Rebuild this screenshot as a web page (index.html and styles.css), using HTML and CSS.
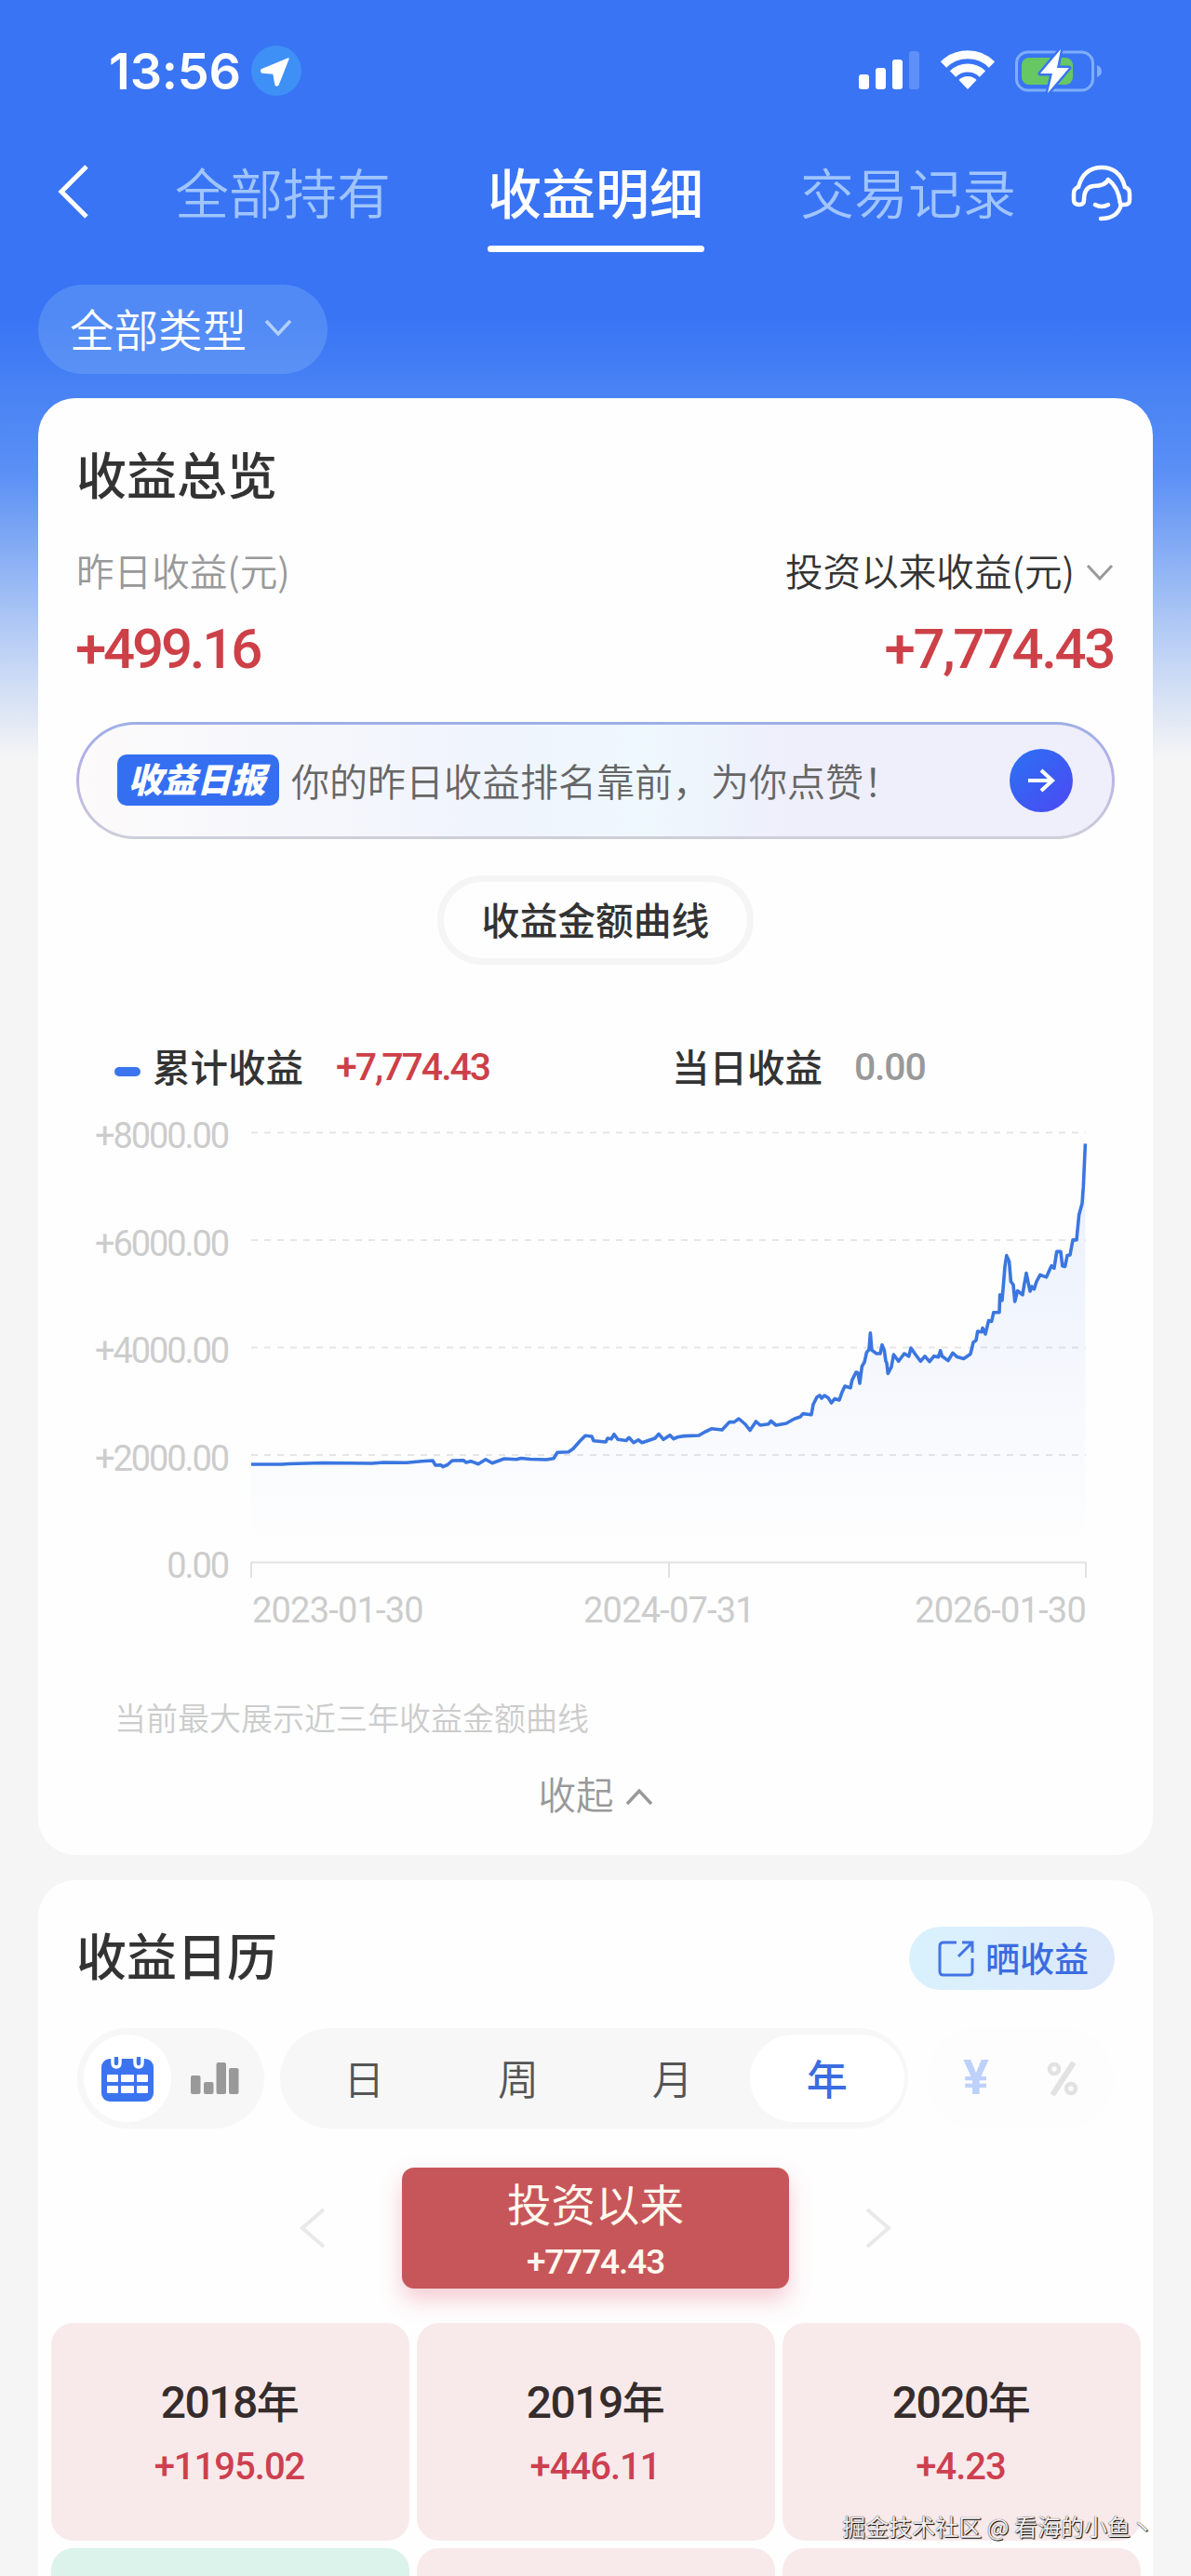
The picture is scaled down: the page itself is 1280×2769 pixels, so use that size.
FILE: index.html
```html
<!DOCTYPE html>
<html lang="zh-CN">
<head>
    <meta charset="UTF-8">
    <title>收益明细</title>
    <link rel="stylesheet" href="styles.css">
</head>
<body>
    <div class="page">
        <!-- Status bar -->
        <div class="status-bar">
            <span class="time">13:56</span>
            <span class="location">
                <svg width="54" height="54" viewBox="0 0 54 54"><path d="M40 14 L11 26 Q10 28 12 29 L24 30 L26 42 Q27 44 29 42 Z" fill="#fff" stroke="#fff" stroke-width="1.5" stroke-linejoin="round"/></svg>
            </span>
            <div class="status-icons">
                <svg width="66" height="44" viewBox="0 0 66 44" fill="#fff">
                    <rect x="0" y="26" width="11" height="16" rx="3"/>
                    <rect x="18" y="19" width="11" height="23" rx="3"/>
                    <rect x="36" y="10" width="11" height="32" rx="3"/>
                    <rect x="54" y="1" width="11" height="41" rx="3" opacity=".2"/>
                </svg>
                <svg width="60" height="44" viewBox="0 0 60 44" fill="none" stroke="#fff" stroke-width="9">
                    <path d="M4 15.500 A37 37 0 0 1 56 15.500"/>
                    <path d="M14 25.500 A23 23 0 0 1 46 25.500"/>
                    <path d="M30 42 L20.500 32 A13.500 13.500 0 0 1 39.500 32 Z" fill="#fff" stroke="none"/>
                </svg>
                <svg width="94" height="48" viewBox="0 0 94 48">
                    <rect x="1.500" y="4" width="82" height="41" rx="12" fill="none" stroke="#7eaefa" stroke-width="3"/>
                    <path d="M88 18 Q93 20 93 24.500 Q93 29 88 31 Z" fill="#7eaefa"/>
                    <rect x="7" y="10" width="55" height="29" rx="8" fill="#66c763"/>
                    <path d="M49 1 L27 27 H40 L35 48 L58 21 H45 Z" fill="#fff" stroke="#3974f5" stroke-width="5" stroke-linejoin="round" paint-order="stroke"/>
                </svg>
            </div>
        </div>

        <!-- Navigation -->
        <div class="nav">
            <svg class="back" width="34" height="60" viewBox="0 0 34 60"><path d="M31 3 L4 30 L31 57" fill="none" stroke="#fff" stroke-width="5"/></svg>
            <span class="tab">全部持有</span>
            <span class="tab active">收益明细</span>
            <span class="tab">交易记录</span>
            <svg class="service" width="66" height="62" viewBox="0 0 66 62" fill="none" stroke="#fff" stroke-width="4.500" stroke-linecap="round" stroke-linejoin="round">
                <path d="M8 24 C12 9 21 3 33 3 C45 3 54 9 58 24"/>
                <path d="M8 24 Q3 26 3 31 V38 Q3 43 9 43 Q14 43 14 38 Q14 24 24 23 Q37 23 40 16 Q51 24 53 42"/>
                <path d="M58 24 Q63 26 63 31 V38 Q63 43 58 43 L54 43 Q50 58 32 58"/>
                <path d="M26 43 Q33 47 40 43"/>
            </svg>
        </div>

        <div class="filter">
            <span>全部类型</span>
            <svg width="30" height="20" viewBox="0 0 30 20"><path d="M2 2 L15 16 L28 2" fill="none" stroke="#b5cffc" stroke-width="3.500"/></svg>
        </div>

        <!-- Overview card -->
        <div class="card overview">
            <h2>收益总览</h2>
            <div class="summary">
                <div class="summary-item">
                    <div class="summary-label muted">昨日收益(元)</div>
                    <div class="summary-value">+499.16</div>
                </div>
                <div class="summary-item right">
                    <div class="summary-label">投资以来收益(元)
                        <svg width="30" height="20" viewBox="0 0 30 20"><path d="M2 2 L15 16 L28 2" fill="none" stroke="#999" stroke-width="3"/></svg>
                    </div>
                    <div class="summary-value">+7,774.43</div>
                </div>
            </div>

            <div class="banner">
                <span class="banner-tag">收益日报</span>
                <span class="banner-text">你的昨日收益排名靠前，为你点赞！</span>
                <span class="banner-arrow">
                    <svg width="30" height="28" viewBox="0 0 30 28"><path d="M1 14 H27 M15 3 L27 14 L15 25" fill="none" stroke="#fff" stroke-width="4"/></svg>
                </span>
            </div>

            <div class="curve-tab">收益金额曲线</div>

            <div class="legend">
                <span class="legend-mark"></span>
                <span class="legend-name">累计收益</span>
                <span class="legend-value red">+7,774.43</span>
                <span class="legend-name second">当日收益</span>
                <span class="legend-value gray">0.00</span>
            </div>

            <div class="chart">
                <div class="y-axis">
                    <span>+8000.00</span>
                    <span>+6000.00</span>
                    <span>+4000.00</span>
                    <span>+2000.00</span>
                    <span>0.00</span>
                </div>
                <svg class="plot" width="900" height="500" viewBox="-1 0 900 500">
                    <defs>
                        <linearGradient id="areaFill" gradientUnits="userSpaceOnUse" x1="0" y1="30" x2="0" y2="460">
                            <stop offset="0" stop-color="#3974e8" stop-opacity=".11"/>
                            <stop offset="1" stop-color="#3974e8" stop-opacity="0"/>
                        </linearGradient>
                    </defs>
                    <g stroke="#e6e6e6" stroke-width="2" stroke-dasharray="7 7">
                        <path d="M0 17.500H897"/>
                        <path d="M0 133H897"/>
                        <path d="M0 248.500H897"/>
                        <path d="M0 364H897"/>
                    </g>
                    <path d="M0 496V479.500H897V496M449 480V496" fill="none" stroke="#e2e2e2" stroke-width="2"/>
                    <path id="area" fill="url(#areaFill)"/>
                    <path id="line" fill="none" stroke="#3b76e0" stroke-width="3.600" stroke-linejoin="round"/>
                </svg>
            </div>
            <div class="x-axis">
                <span>2023-01-30</span>
                <span>2024-07-31</span>
                <span>2026-01-30</span>
            </div>

            <div class="note">当前最大展示近三年收益金额曲线</div>
            <div class="collapse">收起
                <svg width="30" height="20" viewBox="0 0 30 20"><path d="M2 18 L15 4 L28 18" fill="none" stroke="#999" stroke-width="3.500"/></svg>
            </div>
        </div>

        <!-- Calendar card -->
        <div class="card calendar">
            <div class="calendar-header">
                <h2>收益日历</h2>
                <div class="share">
                    <svg width="40" height="40" viewBox="0 0 40 40" fill="none" stroke="#4474e4" stroke-width="3"><path d="M20 3 H6 Q2 3 2 7 V34 Q2 38 6 38 H33 Q37 38 37 34 V20"/><path d="M22 18 L37 3 M26 3 H37 V14"/></svg>
                    <span>晒收益</span>
                </div>
            </div>

            <div class="switches">
                <div class="switch view">
                    <span class="option active">
                        <svg width="56" height="50" viewBox="0 0 56 50">
                            <rect x="0" y="4" width="56" height="46" rx="9" fill="#3b74ee"/>
                            <g fill="none" stroke="#fff" stroke-width="3.500">
                                <path d="M12 2 V8 Q12 13 16 13 Q20 13 20 8 V2 M36 2 V8 Q36 13 40 13 Q44 13 44 8 V2"/>
                            </g>
                            <path d="M16 2V9M40 2V9" stroke="#3b74ee" stroke-width="4"/>
                            <g fill="#fff">
                                <rect x="6" y="21" width="12" height="8" rx="1"/><rect x="21" y="21" width="14" height="8" rx="1"/><rect x="38" y="21" width="12" height="8" rx="1"/>
                                <rect x="6" y="33" width="12" height="8" rx="1"/><rect x="21" y="33" width="14" height="8" rx="1"/><rect x="38" y="33" width="12" height="8" rx="1"/>
                            </g>
                        </svg>
                    </span>
                    <span class="option">
                        <svg width="52" height="36" viewBox="0 0 52 36" fill="#999">
                            <rect x="0" y="15" width="10.500" height="20" rx="2"/>
                            <rect x="14" y="22" width="10.500" height="13" rx="2"/>
                            <rect x="27.500" y="1" width="10.500" height="34" rx="2"/>
                            <rect x="41" y="7" width="10.500" height="28" rx="2"/>
                        </svg>
                    </span>
                </div>
                <div class="switch period">
                    <span class="option">日</span>
                    <span class="option">周</span>
                    <span class="option">月</span>
                    <span class="option active">年</span>
                </div>
                <div class="switch unit">
                    <span class="option yuan">¥</span>
                    <span class="option percent">
                        <svg width="34" height="38" viewBox="0 0 34 38" fill="none" stroke="#e2e2e2" stroke-width="4.500"><circle cx="8" cy="9" r="5"/><circle cx="26" cy="30" r="5"/><path d="M29 2 L6 37" stroke-width="6"/></svg>
                    </span>
                </div>
            </div>

            <div class="range">
                <svg width="30" height="46" viewBox="0 0 30 46"><path d="M27 3 L4 23 L27 43" fill="none" stroke="#e9e9e9" stroke-width="4"/></svg>
                <div class="range-total">
                    <div class="range-name">投资以来</div>
                    <div class="range-value">+7774.43</div>
                </div>
                <svg width="30" height="46" viewBox="0 0 30 46"><path d="M3 3 L26 23 L3 43" fill="none" stroke="#e9e9e9" stroke-width="4"/></svg>
            </div>

            <div class="years">
                <div class="year"><div class="year-name">2018<b>年</b></div><div class="year-value">+1195.02</div></div>
                <div class="year"><div class="year-name">2019<b>年</b></div><div class="year-value">+446.11</div></div>
                <div class="year"><div class="year-name">2020<b>年</b></div><div class="year-value">+4.23</div></div>
                <div class="year loss"></div>
                <div class="year"></div>
                <div class="year"></div>
            </div>
        </div>

        <div class="watermark">掘金技术社区 @ 看海的小鱼丶</div>
    </div>
    <script src="chart.js"></script>
</body>
</html>
```
FILE: styles.css
```css
body {
    margin: 0;
    font-family: "Noto Sans CJK SC", sans-serif;
    color: #333;
    background-color: #f5f5f5;
}
.page {
    position: relative;
    width: 1280px;
    height: 2769px;
    overflow: hidden;
    background: linear-gradient(180deg, #3974f5 0, #3974f5 340px, #4a84f4 430px, #5b90f5 510px, #8fb3f4 610px, #c3d5f5 710px, #f5f5f5 815px);
}

/* Status bar */
.status-bar {
    display: flex;
    align-items: center;
    height: 152px;
    padding: 0 95px 0 117px;
}
.time {
    width: 153px;
    font-family: Inter, sans-serif;
    font-size: 54px;
    font-weight: 600;
    letter-spacing: -0.2px;
    color: #fff;
}
.location {
    width: 54px;
    height: 54px;
    border-radius: 50%;
    background-color: #3f90f6;
}
.status-icons {
    display: flex;
    align-items: center;
    gap: 21px;
    margin-left: auto;
}

/* Navigation */
.nav {
    display: flex;
    align-items: center;
    height: 119px;
    padding: 0 63px 0 62px;
}
.back {
    margin: -12px 92px 0 0;
}
.tab {
    box-sizing: border-box;
    height: 119px;
    width: 233px;
    margin-right: 103px;
    line-height: 106px;
    font-size: 58px;
    font-weight: 350;
    color: #a0c4fd;
    white-space: nowrap;
}
.tab.active {
    position: relative;
    font-weight: 500;
    color: #fff;
}
.tab.active::after {
    content: "";
    position: absolute;
    left: 0;
    bottom: 0;
    width: 233px;
    height: 7px;
    border-radius: 4px;
    background-color: #fff;
}
.service {
    margin: -8px 0 0 -45px;
}

.filter {
    display: flex;
    align-items: center;
    gap: 19px;
    box-sizing: border-box;
    width: 311px;
    height: 96px;
    margin: 35px 0 26px 41px;
    padding-left: 34px;
    border-radius: 48px;
    font-size: 47.5px;
    font-weight: 350;
    line-height: 90px;
    color: #fff;
    background-color: rgba(130, 180, 245, 0.35);
}
.filter svg {
    margin-top: -2px;
}
.filter span {
    margin-top: -2px;
}

/* Cards */
.card {
    box-sizing: border-box;
    width: 1198px;
    margin: 0 41px;
    padding: 0 42px;
    border-radius: 40px;
    background-color: #fefefe;
}
.card h2 {
    margin: 0 0 0 -1px;
    font-size: 54px;
    font-weight: 500;
    line-height: 76px;
}
.overview {
    height: 1566px;
    padding-top: 43px;
}
.summary {
    display: flex;
    justify-content: space-between;
    margin-top: 36px;
}
.summary-label {
    font-size: 40.6px;
    font-weight: 350;
    line-height: 60px;
    height: 60px;
}
.summary-label svg {
    margin-left: 3px;
    vertical-align: 4px;
}
.summary-label.muted {
    margin-left: -1px;
    color: #999;
}
.right {
    text-align: right;
}
.summary-value {
    margin: 20px 0 0 -2px;
    font-family: Roboto, sans-serif;
    font-size: 60px;
    font-weight: 500;
    line-height: 70px;
    letter-spacing: -3.2px;
    color: #cd4047;
}
.right .summary-value {
    margin-right: 0;
    letter-spacing: -2.4px;
}

.banner {
    display: flex;
    align-items: center;
    box-sizing: border-box;
    height: 126px;
    margin: 43px -1px 0;
    padding: 0 42px 0 41px;
    border: 3px solid transparent;
    border-radius: 63px;
    background: linear-gradient(90deg, #fcfafa 0, #f0f4fd 40%, #eef8fd 55%, #eeeffb 68%, #eeeffb 100%) padding-box,
        linear-gradient(180deg, #9dafe6 0, #b6b0e6 40%, #cdcfd8 100%) border-box;
}
.banner-tag {
    width: 174px;
    height: 55px;
    margin-top: -2px;
    border-radius: 10px;
    font-size: 37px;
    font-weight: 900;
    font-style: italic;
    line-height: 51px;
    text-align: center;
    text-indent: -3px;
    color: #fff;
    background-color: #346ff2;
}
.banner-text {
    margin: -2px 0 0 13px;
    font-size: 41px;
    font-weight: 350;
    line-height: 60px;
    color: #666;
    white-space: nowrap;
}
.banner-arrow {
    display: flex;
    align-items: center;
    justify-content: center;
    width: 68px;
    height: 68px;
    margin-left: auto;
    border-radius: 50%;
    background: linear-gradient(135deg, #2b72f2, #4c48f4);
}

.curve-tab {
    box-sizing: border-box;
    width: 340px;
    height: 96px;
    margin: 39px auto 0;
    border: 7px solid #f5f5f5;
    border-radius: 48px;
    font-size: 40.8px;
    font-weight: 500;
    line-height: 80px;
    text-align: center;
}

.legend {
    display: flex;
    align-items: center;
    height: 60px;
    margin: 80px 0 23px 40px;
    white-space: nowrap;
}
.legend-mark {
    width: 28px;
    height: 10px;
    margin: 10px 13px 0 0;
    border-radius: 5px;
    background-color: #3b74ee;
}
.legend-name {
    width: 197px;
    font-size: 40.5px;
    font-weight: 500;
    line-height: 60px;
    margin-top: -3px;
}
.legend-name.second {
    width: 196px;
    margin-left: auto;
}
.legend-value {
    width: 170px;
    font-family: Roboto, sans-serif;
    font-size: 41px;
    letter-spacing: -2px;
}
.legend-value.red {
    font-weight: 500;
    color: #cd4047;
}
.legend-value.gray {
    width: 279px;
    font-weight: 500;
    letter-spacing: -1.2px;
    color: #999;
}

/* Chart */
.chart {
    display: flex;
    gap: 24px;
}
.y-axis {
    display: flex;
    flex-direction: column;
    justify-content: space-between;
    width: 162px;
    height: 498px;
    padding-top: 3px;
    text-align: right;
}
.y-axis span,
.x-axis span {
    font-family: Roboto, sans-serif;
    font-size: 38px;
    font-weight: 400;
    line-height: 36px;
    letter-spacing: -2.1px;
    color: #ccc;
}
.plot {
    display: block;
}
.x-axis {
    display: flex;
    justify-content: space-between;
    width: 896px;
    margin: 12px 0 0 188px;
}
.x-axis span {
    letter-spacing: -0.8px;
}

.note {
    margin: 73px 0 0 40px;
    font-size: 34px;
    font-weight: 350;
    line-height: 48px;
    color: #ccc;
}
.collapse {
    margin-top: 28px;
    font-size: 40.5px;
    font-weight: 350;
    line-height: 60px;
    text-align: center;
    color: #999;
}
.collapse svg {
    margin-left: 3px;
    vertical-align: 4px;
}

/* Calendar */
.calendar {
    height: 800px;
    margin-top: 27px;
    padding-top: 50px;
}
.calendar-header {
    display: flex;
    align-items: center;
    justify-content: space-between;
    height: 68px;
}
.calendar-header h2 {
    margin-top: -8px;
}
.share {
    display: flex;
    align-items: center;
    box-sizing: border-box;
    width: 221px;
    height: 68px;
    margin-right: -1px;
    padding-left: 31px;
    border-radius: 34px;
    background: linear-gradient(100deg, #d9f2fd, #dde8fb);
}
.share span {
    margin: -3px 0 0 11px;
    font-size: 37px;
    font-weight: 500;
    line-height: 60px;
    color: #3b6ce0;
}
.switches {
    display: flex;
    margin-top: 41px;
}
.switch {
    display: flex;
    align-items: center;
    box-sizing: border-box;
    height: 108px;
    padding: 7px;
    border-radius: 54px;
    background-color: #f7f7f7;
}
.option {
    display: flex;
    align-items: center;
    justify-content: center;
    flex: 1;
    height: 94px;
    border-radius: 47px;
    font-size: 44px;
    font-weight: 350;
    line-height: 88px;
    color: #555;
}
.option.active {
    background-color: #fff;
}
.view {
    width: 202px;
}
.period {
    width: 676px;
    margin: 0 20px 0 17px;
    padding-right: 4px;
}
.period .option {
    padding-bottom: 3px;
    height: 91px;
}
.period .active {
    font-weight: 500;
    color: #3b6ce0;
}
.unit {
    width: 202px;
    padding-right: 9px;
    background-color: #fdfdfd;
}
.yuan {
    font-family: Roboto, "Noto Sans CJK SC", sans-serif;
    font-size: 52px;
    font-weight: 700;
    color: #bdd1fb;
}

.range {
    display: flex;
    align-items: center;
    justify-content: center;
    gap: 81px;
    margin-top: 42px;
}
.range-total {
    box-sizing: border-box;
    width: 416px;
    height: 130px;
    padding-top: 5px;
    border-radius: 13px;
    text-align: center;
    color: #fff9ee;
    background-color: #c7565a;
    box-shadow: 0 12px 24px rgba(224, 90, 110, 0.3);
}
.range-name {
    font-size: 47.5px;
    font-weight: 400;
    line-height: 66px;
}
.range-value {
    margin-top: 10px;
    font-family: Roboto, sans-serif;
    font-size: 37px;
    font-weight: 500;
    line-height: 42px;
    letter-spacing: -1.1px;
}

.years {
    display: grid;
    grid-template-columns: repeat(3, 385px);
    gap: 8px;
    margin: 37px 0 0 -28px;
}
.year {
    box-sizing: border-box;
    height: 234px;
    padding: 54px 2px 0 0;
    border-radius: 24px;
    text-align: center;
    background-color: #f8eaeb;
}
.year.loss {
    background-color: #dcf3ec;
}
.year-name {
    font-family: Roboto, sans-serif;
    font-size: 48px;
    font-weight: 500;
    line-height: 64px;
    letter-spacing: -1.5px;
    color: #352c2c;
}
.year-name b {
    font-family: "Noto Sans CJK SC", sans-serif;
    font-size: 46px;
    font-weight: 500;
    line-height: 1;
}
.year-value {
    margin-top: 12px;
    font-family: Roboto, sans-serif;
    font-size: 40px;
    font-weight: 500;
    line-height: 50px;
    letter-spacing: -1px;
    color: #cd4050;
}

.watermark {
    position: absolute;
    right: 40px;
    bottom: 34px;
    font-size: 25px;
    line-height: 40px;
    white-space: nowrap;
    color: #f4f0f0;
    text-shadow: 1px 1px 1px #000, 0 0 1px #000;
}
```
FILE: chart.js
```javascript
// Points of the accumulated income curve, in plot coordinates
const points = [
    [0, 374], [33, 374], [40, 373.5], [77, 372.5], [130, 373], [142, 372], [167, 372.3], [183, 370.7], [195, 370],
    [198, 375], [204, 374.7], [206, 376.7], [211, 374.5], [216, 370], [228, 369.7], [231, 372], [236, 370.7],
    [244, 373.7], [252, 368.7], [259, 372.7], [272, 368], [285, 368.7], [290, 367.5], [300, 368.5], [317, 369],
    [325, 367.7], [329, 361.3], [341, 360.7], [346, 357.3], [353, 349.3], [359, 343.3], [366, 344], [368, 348.7],
    [381, 350], [383, 346], [387, 346.7], [390, 341.7], [394, 347.3], [403, 348.5], [406, 345.3], [411, 350.7],
    [416, 347.7], [420, 350.7], [434, 346], [438, 341.3], [443, 347.3], [450, 342.7], [454, 346.7], [459, 344.5],
    [465, 343.6], [481, 343], [488, 339], [495, 335.7], [506, 337], [514, 328.6], [519, 328.6], [524, 325],
    [531, 331], [536, 337.5], [542.5, 328], [547, 332], [556, 330.7], [558.6, 327.5], [564, 332], [575, 330],
    [584, 325], [590, 323], [593, 319.6], [602, 320.7], [604, 309.6], [608, 301.8], [611, 300], [613, 303],
    [616, 300], [620, 302.5], [623.6, 308], [627, 303.6], [632, 305], [635, 296.4], [638, 290], [644, 291.8],
    [645.7, 283.6], [650, 275], [652, 275.7], [654, 287], [656.4, 268.6], [659, 264.3], [661.4, 253.6],
    [664, 250.7], [665.4, 232.9], [667, 251.4], [672, 255], [676, 255], [678, 245.7], [680.4, 251.4],
    [682, 263.2], [683, 265], [684.3, 276.4], [688, 269.3], [690.4, 256], [695.7, 263.2], [701.8, 255],
    [706.8, 257.9], [709, 249], [714.6, 257], [719.3, 263.2], [724, 257.9], [729, 263.6], [733.6, 257.9],
    [738.6, 258.6], [740.7, 251.8], [742.5, 257.9], [749, 262.5], [754, 254.3], [758.6, 258.6], [765.7, 260.4],
    [773, 255.4], [776, 242.9], [779, 240.7], [780.7, 231], [785, 231.8], [786, 227.5], [789, 234],
    [792.5, 219.6], [795.7, 220.4], [797.9, 210.7], [804, 210.7], [804.6, 191.8], [807, 197.9], [810, 161.4],
    [811.8, 149.6], [814.6, 156], [816.4, 177.5], [819, 181], [820.7, 199], [823.6, 187.5], [829, 191.8],
    [830.7, 181], [833, 168.6], [837, 188], [839, 182.9], [841.4, 185.7], [844, 177.5], [847.9, 170.4],
    [854.6, 172.9], [858, 165], [860, 160.7], [862.9, 163.2], [865.7, 145.4], [870, 145.4], [871.8, 160.7],
    [874.6, 161.4], [877, 149.6], [880, 149], [883, 132.9], [887, 132.9], [889.6, 106], [893, 93.6],
    [894.3, 75.7], [896.4, 29.3]
];

const line = 'M' + points.map(p => p.join(' ')).join('L');
document.getElementById('line').setAttribute('d', line);
document.getElementById('area').setAttribute('d', line + 'V479H0Z');
```
